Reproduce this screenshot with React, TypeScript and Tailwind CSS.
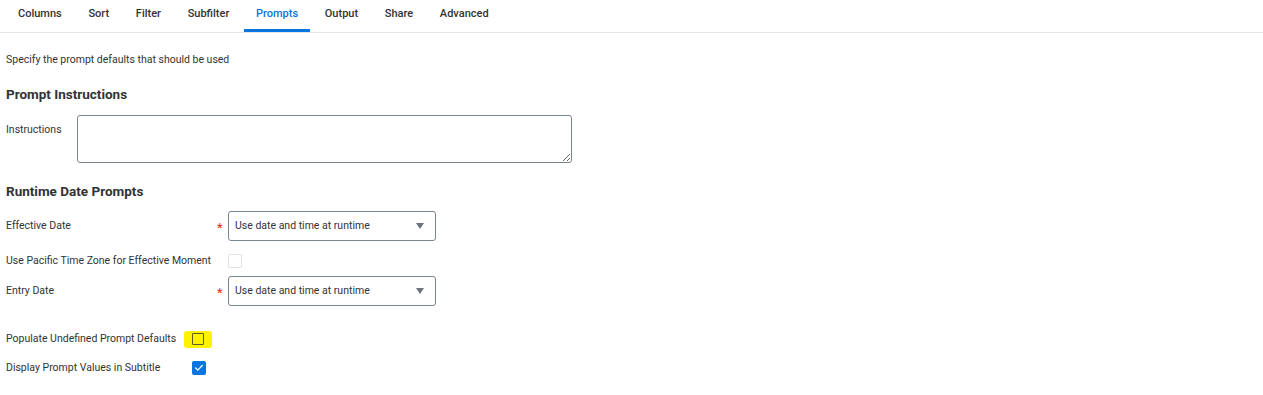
import { Check } from 'lucide-react'

const tabs = ['Columns', 'Sort', 'Filter', 'Subfilter', 'Prompts', 'Output', 'Share', 'Advanced']

function Caret() {
    return (
        <svg width="8" height="6" viewBox="0 0 8 6" className="text-[#6b7280]">
            <path d="M0 0h8L4 6z" fill="currentColor" />
        </svg>
    )
}

function DateSelect() {
    return (
        <div className="w-[208px] h-[30px] border border-[#7b858f] rounded-[3px] flex items-center justify-between pl-[6px] pr-[11px] text-[10.5px] text-[#333]">
            Use date and time at runtime
            <Caret />
        </div>
    )
}

export default function App() {
    return (
        <div className="w-[1263px] h-[395px] bg-white text-[#333] font-['Roboto',sans-serif] overflow-hidden">
            {/* Tabs */}
            <div className="flex h-[33px] border-b border-[#e3e4e6] pl-[6px]">
                {tabs.map((tab) => {
                    const active = tab === 'Prompts'
                    return (
                        <div
                            key={tab}
                            className={
                                active
                                    ? 'px-[12px] pt-[6px] h-[32px] text-[11px] font-medium text-[#0875e1] border-b-[3px] border-[#0875e1] mr-[2.7px]'
                                    : 'px-[12px] pt-[6px] h-[32px] text-[11px] font-medium text-[#333] mr-[2.7px]'
                            }
                        >
                            {tab}
                        </div>
                    )
                })}
            </div>

            <div className="pl-[6px]">
                <p className="mt-[20px] text-[10.5px] leading-[14px] text-[#333]">Specify the prompt defaults that should be used</p>

                <h2 className="mt-[17px] text-[13.5px] leading-[20px] font-bold text-[#333]">Prompt Instructions</h2>

                <div className="mt-[11px] flex">
                    <div className="w-[71px] pt-[8px] text-[10.5px] leading-[13px]">Instructions</div>
                    <textarea className="w-[495px] h-[48px] border border-[#7b858f] rounded-[3px] resize-y" />
                </div>

                <h2 className="mt-[18px] text-[13.5px] leading-[20px] font-bold text-[#333]">Runtime Date Prompts</h2>

                <div className="mt-[10px] flex items-center h-[30px]">
                    <div className="w-[211px] text-[10.5px]">Effective Date</div>
                    <span className="w-[11px] text-[13px] text-[#de2e21] pt-[3px]">*</span>
                    <DateSelect />
                </div>

                <div className="mt-[12px] flex items-center h-[15px]">
                    <div className="w-[222px] text-[10.5px]">Use Pacific Time Zone for Effective Moment</div>
                    <div className="w-[14px] h-[14px] border border-[#dfe2e6] rounded-[2px]" />
                </div>

                <div className="mt-[8px] flex items-center h-[30px]">
                    <div className="w-[211px] text-[10.5px]">Entry Date</div>
                    <span className="w-[11px] text-[13px] text-[#de2e21] pt-[3px]">*</span>
                    <DateSelect />
                </div>

                <div className="mt-[24px] flex items-center h-[18px]">
                    <div className="text-[10.5px]">Populate Undefined Prompt Defaults</div>
                    <div className="ml-[8px] w-[28px] h-[17px] bg-[#fff200] rounded-[3px] flex items-center justify-center">
                        <div className="w-[12px] h-[12px] border border-[#5f5a1e] rounded-[1px]" />
                    </div>
                </div>

                <div className="mt-[12px] flex items-center h-[15px]">
                    <div className="w-[186px] text-[10.5px]">Display Prompt Values in Subtitle</div>
                    <div className="w-[14px] h-[14px] bg-[#0875e1] rounded-[2px] flex items-center justify-center">
                        <Check size={10} strokeWidth={3} className="text-white" />
                    </div>
                </div>
            </div>
        </div>
    )
}
